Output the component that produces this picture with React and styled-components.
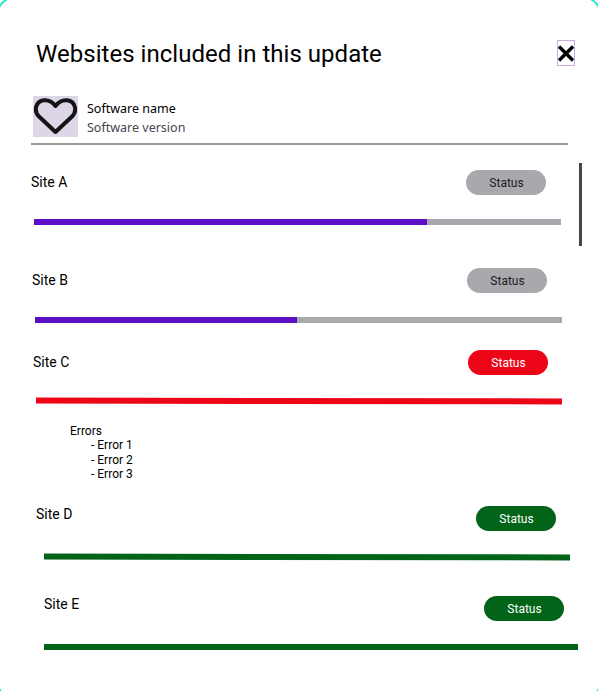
import styled, { createGlobalStyle } from "styled-components"

const GlobalStyle = createGlobalStyle`
  html, body {
    margin: 0;
    padding: 0;
    background: #ffffff;
    font-family: Roboto, "Liberation Sans", sans-serif;
    color: #000000;
  }
`

const Dialog = styled.div`
  position: relative;
  width: 598px;
  height: 691px;
  box-sizing: border-box;
  overflow: hidden;
  background: #ffffff;
  padding-top: 39px;

  /* outline of the modal, only its corners stay inside the frame */
  &::before {
    content: "";
    position: absolute;
    top: -4px;
    left: -4px;
    right: -4px;
    bottom: -9px;
    border: 2px solid #2ee6cf;
    border-radius: 20px;
    pointer-events: none;
  }
`

const Header = styled.header`
  display: flex;
  align-items: center;
  justify-content: space-between;
  height: 30px;
  padding: 0 23px 0 36px;
`

const Title = styled.h1`
  margin: 0;
  font-size: 24px;
  font-weight: 400;
  line-height: 30px;
  letter-spacing: 0.03px;
`

const CloseButton = styled.button`
  display: flex;
  align-items: center;
  justify-content: center;
  width: 18px;
  height: 26px;
  margin-bottom: 2px;
  padding: 1px 0 0;
  background: none;
  border: 1px solid #c9aee6;
`

const Software = styled.div`
  display: flex;
  align-items: center;
  gap: 9px;
  width: 537px;
  height: 49px;
  margin: 27px 0 0 31px;
  padding: 0 0 6px 2px;
  box-sizing: border-box;
  border-bottom: 2px solid #9a9a9a;
`

const Thumb = styled.div`
  display: flex;
  align-items: center;
  justify-content: center;
  width: 45px;
  height: 41px;
  background: #ddd6e7;
`

const SoftwareText = styled.div`
  display: flex;
  flex-direction: column;
  gap: 3px;
  padding-top: 3px;
  font-family: "Noto Sans", sans-serif;
  font-size: 12.5px;
  line-height: 16px;
`

const SoftwareVersion = styled.span`
  color: #49454f;
`

const SiteList = styled.div`
  display: flex;
  flex-direction: column;
  margin-top: 25px;
`

const Site = styled.section`
  height: ${(props) => props.$height}px;
  padding-left: ${(props) => props.$left}px;
  box-sizing: border-box;
`

const SiteRow = styled.div`
  display: flex;
  align-items: center;
  justify-content: space-between;
  width: ${(props) => props.$width}px;
  height: 25px;
`

const SiteName = styled.span`
  font-size: 14px;
  position: relative;
  top: ${(props) => props.$lift}px;
`

const Status = styled.span`
  display: flex;
  align-items: center;
  justify-content: center;
  width: 80px;
  height: 25px;
  padding-left: 1px;
  box-sizing: border-box;
  border-radius: 13px;
  font-size: 12px;
  background: ${(props) => props.$bg};
  color: ${(props) => props.$fg};
`

const Track = styled.div`
  width: ${(props) => props.$width}px;
  height: 6px;
  margin-top: ${(props) => props.$top}px;
  margin-left: ${(props) => props.$inset}px;
  background: ${(props) => props.$bg};
  transform: rotate(${(props) => props.$tilt}deg);
`

const Fill = styled.div`
  height: 100%;
  background: #5c0fc4;
`

const Errors = styled.div`
  height: 87px;
  padding: 4.7px 0 0 70px;
  box-sizing: border-box;
  font-size: 12px;
  line-height: 14.6px;
`

const ErrorList = styled.ul`
  list-style: none;
  margin: 0;
  padding: 0 0 0 21px;
`

const Scrollbar = styled.div`
  position: absolute;
  top: 163px;
  left: 579px;
  width: 3px;
  height: 83px;
  background: #49454f;
`

const gray = "#a9a9ad"
const red = "#ec0618"
const green = "#026418"

const sites = [
  { name: "Site A", left: 31, height: 98, width: 515, lift: -1, inset: 3, barWidth: 527, top: 24, tilt: 0, pill: gray, text: "#1c1b1f", track: gray, fill: 74.5 },
  { name: "Site B", left: 32, height: 82, width: 515, lift: -1, inset: 3, barWidth: 527, top: 24, tilt: 0, pill: gray, text: "#1c1b1f", track: gray, fill: 49.7 },
  { name: "Site C", left: 33, height: 69, width: 515, lift: -1, inset: 3, barWidth: 526, top: 23, tilt: 0.1, pill: red, text: "#ffffff", track: red },
  { name: "Site D", left: 36, height: 90, width: 520, lift: -5, inset: 8, barWidth: 526, top: 23, tilt: 0.1, pill: green, text: "#ffffff", track: green },
  { name: "Site E", left: 44, height: 90, width: 520, lift: -5, inset: 0, barWidth: 534, top: 23, tilt: 0.02, pill: green, text: "#ffffff", track: green },
]

function SiteItem({ site }) {
  return (
    <Site $left={site.left} $height={site.height}>
      <SiteRow $width={site.width}>
        <SiteName $lift={site.lift}>{site.name}</SiteName>
        <Status $bg={site.pill} $fg={site.text}>Status</Status>
      </SiteRow>
      <Track $width={site.barWidth} $top={site.top} $inset={site.inset} $bg={site.track} $tilt={site.tilt}>
        {site.fill && <Fill style={{ width: `${site.fill}%` }} />}
      </Track>
    </Site>
  )
}

function App() {
  return (
    <Dialog>
      <GlobalStyle />
      <Header>
        <Title>Websites included in this update</Title>
        <CloseButton aria-label="Close">
          <svg width="16" height="17" viewBox="0 0 16 17">
            <path d="M1 1.5 L15 15.5 M15 1.5 L1 15.5" stroke="#000" strokeWidth="3.4" fill="none" />
          </svg>
        </CloseButton>
      </Header>
      <Software>
        <Thumb>
          <svg width="45" height="39" viewBox="0 0 45 39" style={{ filter: "blur(0.4px)" }}>
            <path
              d="M22.5 35 L6 19.5 C0.5 14 2.5 4 11 3.2 C15.5 2.8 19.5 4.8 22.5 9 C25.5 4.8 29.5 2.8 34 3.2 C42.5 4 44.5 14 39 19.5 Z"
              stroke="#141414"
              strokeWidth="4"
              strokeLinejoin="round"
              fill="none"
            />
          </svg>
        </Thumb>
        <SoftwareText>
          <span>Software name</span>
          <SoftwareVersion>Software version</SoftwareVersion>
        </SoftwareText>
      </Software>
      <SiteList>
        {sites.slice(0, 3).map((site) => <SiteItem key={site.name} site={site} />)}
        <Errors>
          Errors
          <ErrorList>
            <li>- Error 1</li>
            <li>- Error 2</li>
            <li>- Error 3</li>
          </ErrorList>
        </Errors>
        {sites.slice(3).map((site) => <SiteItem key={site.name} site={site} />)}
      </SiteList>
      <Scrollbar />
    </Dialog>
  )
}

export default App
